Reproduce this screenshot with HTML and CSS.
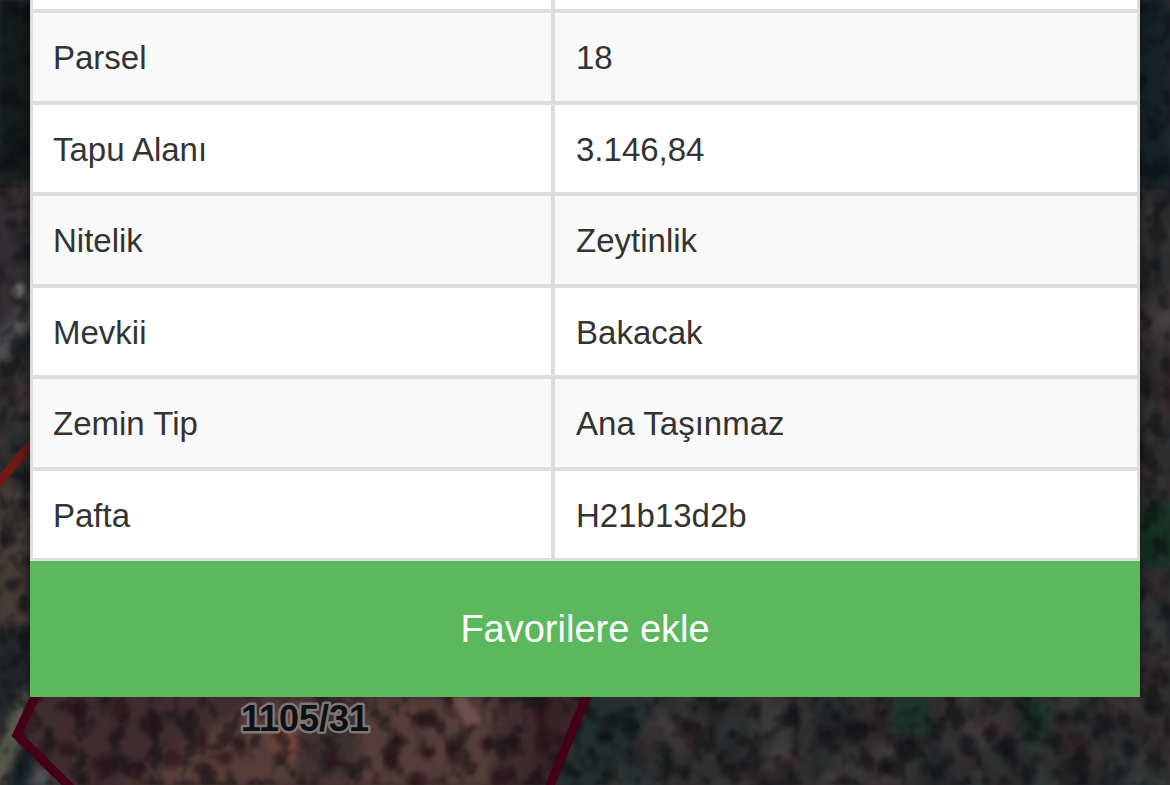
FILE: index.html
```html
<!DOCTYPE html>
<html lang="tr">
<head>
    <meta charset="UTF-8">
    <meta name="viewport" content="width=device-width, initial-scale=1.0">
    <title>Parsel Bilgisi</title>
    <link rel="stylesheet" href="styles.css">
</head>
<body>
    <svg class="map" viewBox="0 0 1170 785" preserveAspectRatio="xMidYMid slice">
        <defs>
            <filter id="soft" x="-30%" y="-30%" width="160%" height="160%">
                <feGaussianBlur stdDeviation="5" />
            </filter>
            <filter id="crown" x="-30%" y="-30%" width="160%" height="160%">
                <feGaussianBlur stdDeviation="2" />
            </filter>
            <!-- tree crowns -->
            <filter id="trees" x="0" y="0" width="100%" height="100%" color-interpolation-filters="sRGB">
                <feTurbulence type="fractalNoise" baseFrequency="0.055 0.045" numOctaves="3" seed="8" />
                <feColorMatrix values="0 0 0 0 0.03  0 0 0 0 0.04  0 0 0 0 0.05  4 0 0 0 -1.8" />
                <feGaussianBlur stdDeviation="1" />
            </filter>
            <!-- ground colour changes -->
            <filter id="ground" x="0" y="0" width="100%" height="100%" color-interpolation-filters="sRGB">
                <feTurbulence type="fractalNoise" baseFrequency="0.02" numOctaves="4" seed="21" />
                <feColorMatrix values="0.14 0.14 0 0 0.05  0.02 0.16 0 0 0.09  0.03 0.14 0 0 0.1  0 0 0 0 1" />
            </filter>
        </defs>
        <rect width="1170" height="785" fill="#26272a" />
        <rect width="1170" height="785" filter="url(#ground)" />

        <g filter="url(#soft)">
            <path d="M-5 0H35V180H-5z" fill="#151c1f" />
            <path d="M-5 195H35V300L-5 350z" fill="#322e30" />
            <path d="M-5 340L35 290V322L-5 370z" fill="#545254" />
            <path d="M-5 485H35V630H-5z" fill="#443e38" />
            <path d="M-5 632H32V700L-5 760z" fill="#20282b" />
            <path d="M24 690L40 697L8 785H-6V755z" fill="#5b5b52" />
            <path d="M16 748L35 742L42 790H4z" fill="#172126" />
            <path d="M38 762L62 785H28z" fill="#56545a" />
            <path d="M1140 0H1170V190H1140z" fill="#182327" />
            <path d="M1138 505L1172 500V565L1138 572z" fill="#183122" />
            <path d="M590 697H660L610 785H555z" fill="#202d2f" />
            <path d="M890 697H930V735H890zM1025 700H1050V745H1025z" fill="#1b3429" />
        </g>
        <path d="M13 286L22 282L26 291L18 299L11 293z" fill="#6b6a69" filter="url(#crown)" />

        <path d="M35 697H586L550 785H68L17 735z" fill="#402c2f" />
        <g filter="url(#soft)">
            <path d="M120 785L210 730L260 700H500L490 785z" fill="#563d3a" />
            <path d="M255 716H310L295 764L280 757z" fill="#77453f" />
            <path d="M308 710H360V780H290z" fill="#403033" />
            <path d="M540 700H584L548 785H528z" fill="#382026" />
        </g>

        <rect width="1170" height="785" filter="url(#trees)" opacity="0.5" />

        <g class="crowns" filter="url(#crown)">
            <ellipse cx="75" cy="708" rx="11" ry="7" />
            <ellipse cx="120" cy="709" rx="9" ry="11" />
            <ellipse cx="152" cy="727" rx="7" ry="12" />
            <ellipse cx="67" cy="749" rx="9" ry="7" />
            <ellipse cx="104" cy="766" rx="10" ry="12" />
            <ellipse cx="137" cy="772" rx="8" ry="10" />
            <ellipse cx="173" cy="759" rx="11" ry="9" />
            <ellipse cx="203" cy="769" rx="10" ry="7" />
            <ellipse cx="225" cy="758" rx="8" ry="7" />
            <ellipse cx="239" cy="743" rx="7" ry="8" />
            <ellipse cx="202" cy="740" rx="6" ry="11" />
            <ellipse cx="331" cy="760" rx="8" ry="10" />
            <ellipse cx="391" cy="760" rx="7" ry="11" />
            <ellipse cx="398" cy="741" rx="9" ry="6" />
            <ellipse cx="427" cy="753" rx="6" ry="7" />
            <ellipse cx="427" cy="719" rx="11" ry="9" />
            <ellipse cx="455" cy="755" rx="8" ry="11" />
            <ellipse cx="488" cy="744" rx="8" ry="7" />
            <ellipse cx="513" cy="746" rx="6" ry="10" />
            <ellipse cx="503" cy="777" rx="12" ry="9" />
            <ellipse cx="418" cy="780" rx="10" ry="8" />
            <ellipse cx="540" cy="712" rx="7" ry="11" />
            <ellipse cx="542" cy="740" rx="8" ry="13" />
        </g>
        <path d="M452 697L466 697L482 722L466 727z" fill="#6e504f" filter="url(#crown)" />
        <g class="crowns-dark" filter="url(#crown)">
            <ellipse cx="603" cy="736" rx="7" ry="7" />
            <ellipse cx="632" cy="732" rx="5" ry="10" />
            <ellipse cx="687" cy="727" rx="9" ry="9" />
            <ellipse cx="711" cy="733" rx="5" ry="12" />
            <ellipse cx="745" cy="765" rx="9" ry="6" />
            <ellipse cx="794" cy="716" rx="8" ry="9" />
            <ellipse cx="826" cy="736" rx="10" ry="9" />
            <ellipse cx="856" cy="732" rx="9" ry="11" />
            <ellipse cx="886" cy="766" rx="8" ry="9" />
            <ellipse cx="910" cy="752" rx="8" ry="9" />
            <ellipse cx="968" cy="744" rx="8" ry="10" />
            <ellipse cx="1007" cy="746" rx="9" ry="12" />
            <ellipse cx="1036" cy="724" rx="7" ry="10" />
            <ellipse cx="1062" cy="718" rx="7" ry="7" />
            <ellipse cx="1107" cy="724" rx="8" ry="9" />
            <ellipse cx="1130" cy="749" rx="8" ry="9" />
            <ellipse cx="1154" cy="709" rx="9" ry="7" />
            <ellipse cx="8" cy="539" rx="9" ry="7" />
            <ellipse cx="24" cy="505" rx="7" ry="9" />
            <ellipse cx="12" cy="585" rx="8" ry="6" />
            <ellipse cx="23" cy="606" rx="6" ry="7" />
            <ellipse cx="18" cy="345" rx="9" ry="10" />
            <ellipse cx="10" cy="162" rx="9" ry="7" />
        </g>

        <path class="parcel-line" d="M36 695L17 735L73 790" />
        <path class="parcel-line" d="M587 695L548 790" />
        <path class="parcel-line-red" d="M-4 486L36 438" />
        <text class="parcel-label" x="305" y="731" text-anchor="middle">1105/31</text>
    </svg>

    <main class="modal">
        <table class="parcel-table">
            <tbody>
                <tr class="row-top">
                    <td></td>
                    <td></td>
                </tr>
                <tr>
                    <td>Parsel</td>
                    <td>18</td>
                </tr>
                <tr>
                    <td>Tapu Alanı</td>
                    <td>3.146,84</td>
                </tr>
                <tr>
                    <td>Nitelik</td>
                    <td>Zeytinlik</td>
                </tr>
                <tr>
                    <td>Mevkii</td>
                    <td>Bakacak</td>
                </tr>
                <tr>
                    <td>Zemin Tip</td>
                    <td>Ana Taşınmaz</td>
                </tr>
                <tr>
                    <td>Pafta</td>
                    <td>H21b13d2b</td>
                </tr>
            </tbody>
        </table>
        <button type="button" class="btn-favorite">Favorilere ekle</button>
    </main>
</body>
</html>
```
FILE: styles.css
```css
body {
    margin: 0;
    font-family: "Liberation Sans", Arial, sans-serif;
    color: #333;
    background-color: #202224;
}
.map {
    position: fixed;
    top: 0;
    left: 0;
    width: 100%;
    height: 100%;
}
.crowns {
    fill: #260e12;
    opacity: 0.6;
}
.crowns-dark {
    fill: #0a1012;
    opacity: 0.6;
}
.parcel-line {
    fill: none;
    stroke: #430016;
    stroke-width: 9px;
}
.parcel-line-red {
    stroke: #6b1a18;
    stroke-width: 9px;
}
.parcel-label {
    font-size: 36px;
    font-weight: bold;
    fill: #101010;
    stroke: #7b7777;
    stroke-width: 5px;
    stroke-linejoin: round;
    paint-order: stroke;
}
.modal {
    position: relative;
    margin: 0 30px;
    box-shadow: 0 0 12px rgba(0, 0, 0, 0.6);
}
.parcel-table {
    width: 100%;
    table-layout: fixed;
    border-collapse: separate;
    border-spacing: 0;
    background-color: #fff;
    font-size: 33px;
    line-height: 38px;
}
.parcel-table td {
    box-sizing: border-box;
    height: 91px;
    padding: 2px 21px 0;
    border-right: 3px solid #ddd;
    border-bottom: 4px solid #ddd;
    vertical-align: middle;
}
.parcel-table td:first-child {
    width: 47.3%;
    padding-left: 20px;
    border-left: 3px solid #ddd;
    border-right-width: 4px;
}
.parcel-table tr:nth-child(even) td {
    height: 92px;
    background-color: #f9f9f9;
}
.parcel-table tr:last-child td {
    height: 90px;
    border-bottom-width: 3px;
}
.parcel-table .row-top td {
    height: 13px;
}
.btn-favorite {
    display: block;
    width: 100%;
    padding: 46px 20px;
    border: none;
    background-color: #5cb85c;
    color: #fff;
    font-family: inherit;
    font-size: 38px;
    line-height: 44px;
    cursor: pointer;
}
.btn-favorite:hover {
    background-color: #449d44;
}
```
